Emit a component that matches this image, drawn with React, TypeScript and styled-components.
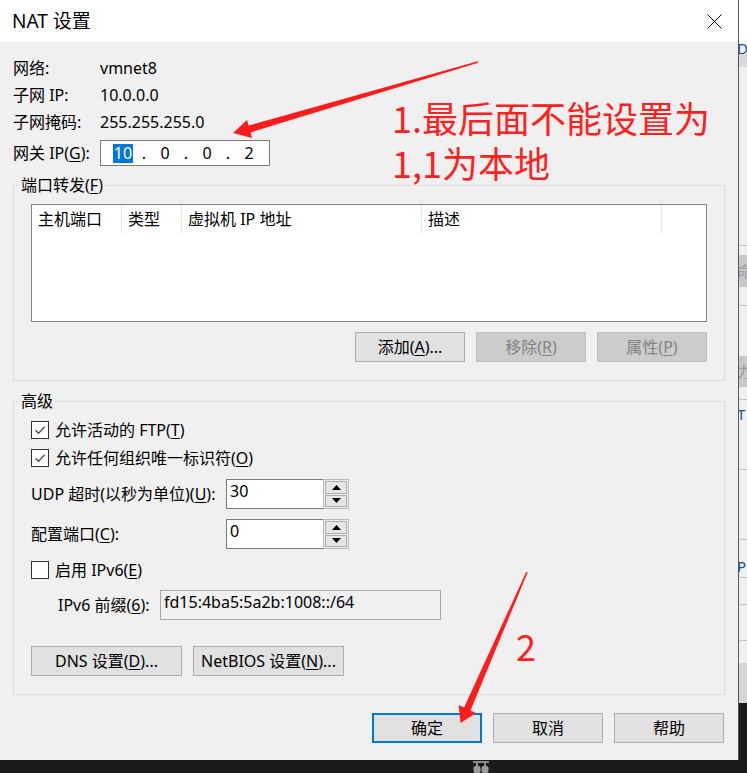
import React from "react";
import styled, { createGlobalStyle, css } from "styled-components";

const GlobalStyle = createGlobalStyle`
    html, body {
        margin: 0;
        padding: 0;
        background: #1b1b1b;
    }
    * {
        box-sizing: border-box;
    }
`;

const Desktop = styled.div`
    position: relative;
    width: 747px;
    height: 773px;
    overflow: hidden;
    display: grid;
    grid-template-columns: 739px 8px;
    grid-template-rows: 760px 13px;
    background: #1b1b1b;
    font-family: "Noto Sans", "Noto Sans CJK SC", sans-serif;
    font-size: 16px;
    line-height: 20px;
    color: #000;
`;

const Dialog = styled.div`
    display: flex;
    flex-direction: column;
    background: #f0f0f0;
    border-right: 1px solid #575757;
`;

const TitleBar = styled.div`
    flex: none;
    height: 42px;
    display: flex;
    align-items: center;
    justify-content: space-between;
    padding-left: 12px;
    background: #fff;
`;

const Title = styled.span`
    font-size: 19px;
    line-height: 24px;
`;

const CloseButton = styled.div`
    width: 47px;
    height: 42px;
    display: flex;
    align-items: center;
    justify-content: center;
`;

const Body = styled.div`
    flex: 1;
    display: flex;
    flex-direction: column;
    padding: 12px 13px 0;
`;

const InfoGrid = styled.div`
    display: grid;
    grid-template-columns: 87px auto;
    grid-auto-rows: 27px;
    align-items: center;
`;

const GatewayRow = styled.div`
    display: grid;
    grid-template-columns: 87px 170px;
    align-items: center;
    height: 26px;
    margin-top: 5px;
`;

const IpField = styled.div`
    display: flex;
    align-items: center;
    height: 26px;
    padding-left: 8px;
    border: 1px solid #7a7a7a;
    background: #fff;
`;

const IpOctet = styled.span`
    width: 28px;
    text-align: center;
`;

const IpDot = styled.span`
    width: 14px;
    text-align: center;
`;

const Selected = styled.span`
    display: inline-block;
    padding: 0 1px;
    line-height: 19px;
    background: #0078d7;
    color: #fff;
`;

const Key = styled.span`
    text-decoration: underline;
    text-underline-offset: 2px;
`;

const Group = styled.section<{ $gap: number; $top: number }>`
    position: relative;
    margin-top: ${(p) => p.$gap}px;
    padding: ${(p) => p.$top}px 17px 18px;
    border: 1px solid #dcdcdc;
`;

const GroupTitle = styled.span`
    position: absolute;
    top: -11px;
    left: 5px;
    padding: 0 2px;
    background: #f0f0f0;
`;

const ListView = styled.div`
    height: 118px;
    border: 1px solid #828790;
    background: #fff;
`;

const ListHeader = styled.div`
    display: flex;
    height: 28px;
`;

const HeaderCell = styled.div<{ $w: number }>`
    width: ${(p) => p.$w}px;
    padding-left: 6px;
    line-height: 28px;
    border-right: 1px solid #e5e5e5;
`;

const ButtonRow = styled.div<{ $align: "start" | "end"; $gap: number }>`
    display: flex;
    justify-content: ${(p) => (p.$align === "end" ? "flex-end" : "flex-start")};
    gap: 11px;
    margin-top: ${(p) => p.$gap}px;
`;

type ButtonKind = "normal" | "default" | "disabled";

const Button = styled.button<{ $w?: number; $kind?: ButtonKind }>`
    width: ${(p) => p.$w ?? 110}px;
    height: 30px;
    padding: 0;
    font: inherit;
    color: #000;
    background: #e1e1e1;
    border: 1px solid #adadad;
    ${(p) =>
        p.$kind === "default" &&
        css`
            border: 2px solid #0078d7;
        `}
    ${(p) =>
        p.$kind === "disabled" &&
        css`
            background: #cccccc;
            border-color: #bfbfbf;
            color: #838383;
        `}
`;

const CheckRow = styled.label<{ $gap?: number }>`
    display: flex;
    align-items: center;
    gap: 6px;
    height: 28px;
    margin-top: ${(p) => p.$gap ?? 0}px;
`;

const CheckBox = styled.span`
    width: 18px;
    height: 18px;
    display: flex;
    align-items: center;
    justify-content: center;
    border: 1px solid #333;
    background: #fff;
`;

const FieldRow = styled.div<{ $gap: number }>`
    display: grid;
    grid-template-columns: 195px 123px;
    align-items: center;
    height: 30px;
    margin-top: ${(p) => p.$gap}px;
`;

const SpinBox = styled.div`
    display: flex;
    height: 30px;
`;

const SpinInput = styled.div`
    flex: 1;
    padding: 1px 3px;
    border: 1px solid #7a7a7a;
    border-right: none;
    background: #fff;
`;

const SpinButtons = styled.div`
    width: 26px;
    display: flex;
    flex-direction: column;
    gap: 1px;
    padding: 1px;
    border: 1px solid #b9b9b9;
    background: #f0f0f0;
`;

const SpinButton = styled.div`
    flex: 1;
    display: flex;
    align-items: center;
    justify-content: center;
    border: 1px solid #adadad;
    background: #e5e5e5;
`;

const PrefixRow = styled.div`
    display: flex;
    align-items: center;
    height: 30px;
    margin-top: 6px;
    padding-left: 27px;
`;

const PrefixLabel = styled.span`
    width: 102px;
`;

const ReadOnlyField = styled.div`
    width: 281px;
    height: 30px;
    padding: 1px 3px;
    border: 1px solid #a9a9a9;
    background: #f0f0f0;
`;

const Footer = styled.div`
    display: flex;
    justify-content: flex-end;
    gap: 11px;
    margin-top: 18px;
    padding-right: 1px;
`;

const BackWindow = styled.div`
    align-self: start;
    height: 703px;
    display: flex;
    flex-direction: column;
    background: #f0f0f0;
    box-shadow: inset 3px 0 3px -2px rgba(0, 0, 0, 0.35);
    overflow: hidden;
`;

const BackRow = styled.div<{ $h: number; $bg: string; $line?: boolean; $ink?: string }>`
    flex: none;
    height: ${(p) => p.$h}px;
    background: ${(p) => p.$bg};
    border-bottom: ${(p) => (p.$line ? "1px solid #c4c4c4" : "none")};
    color: ${(p) => p.$ink ?? "#000"};
    font-size: 15px;
    line-height: ${(p) => p.$h}px;
    white-space: nowrap;
    overflow: hidden;
    text-indent: -2px;
`;

const Taskbar = styled.div`
    grid-column: 1 / span 2;
    display: flex;
    align-items: flex-start;
    padding-left: 472px;
    background: #1b1b1b;
`;

const Overlay = styled.svg`
    position: absolute;
    inset: 0;
    pointer-events: none;
`;

const Note = styled.div<{ $top: number; $left: number; $size: number; $lh: number }>`
    position: absolute;
    top: ${(p) => p.$top}px;
    left: ${(p) => p.$left}px;
    font-family: "Noto Sans CJK SC", sans-serif;
    font-size: ${(p) => p.$size}px;
    line-height: ${(p) => p.$lh}px;
    color: #ff2020;
    white-space: pre;
    pointer-events: none;
`;

const Check = () => (
    <svg width="12" height="12" viewBox="0 0 12 12">
        <path d="M1.5 6.2 L4.6 9.2 L10.6 2.8" fill="none" stroke="#505050" strokeWidth="1.3" />
    </svg>
);

const Arrow = ({ up }: { up: boolean }) => (
    <svg width="9" height="5" viewBox="0 0 9 5">
        <polygon points={up ? "0,5 9,5 4.5,0" : "0,0 9,0 4.5,5"} fill="#000" />
    </svg>
);

const Spinner = ({ value }: { value: string }) => (
    <SpinBox>
        <SpinInput>{value}</SpinInput>
        <SpinButtons>
            <SpinButton>
                <Arrow up />
            </SpinButton>
            <SpinButton>
                <Arrow up={false} />
            </SpinButton>
        </SpinButtons>
    </SpinBox>
);

// strip of the window that sits behind the dialog
const backRows = [
    { h: 43, bg: "#ffffff" },
    { h: 11, bg: "#f4f4f4", ink: "#1a4fa0", text: "D" },
    { h: 13, bg: "#dadada" },
    { h: 179, bg: "#f0f0f0", line: true },
    { h: 9, bg: "#f0f0f0" },
    { h: 32, bg: "#c9c9c9", ink: "#9a9a9a", text: "命" },
    { h: 19, bg: "#f0f0f0", line: true },
    { h: 50, bg: "#f0f0f0" },
    { h: 31, bg: "#c9c9c9", ink: "#9a9a9a", text: "力" },
    { h: 13, bg: "#f0f0f0", line: true },
    { h: 28, bg: "#f0f0f0", ink: "#1a4fa0", text: "T" },
    { h: 42, bg: "#f0f0f0", line: true },
    { h: 70, bg: "#f0f0f0", line: true },
    { h: 14, bg: "#f0f0f0" },
    { h: 24, bg: "#f0f0f0", ink: "#1a4fa0", text: "P", line: true },
    { h: 27, bg: "#f0f0f0", line: true },
    { h: 36, bg: "#f0f0f0", line: true },
    { h: 22, bg: "#f0f0f0" },
    { h: 40, bg: "#d6d6d6" },
];

export default function App() {
    return (
        <Desktop>
            <GlobalStyle />
            <Dialog>
                <TitleBar>
                    <Title>NAT 设置</Title>
                    <CloseButton>
                        <svg width="15" height="15" viewBox="0 0 15 15">
                            <path d="M0.5 0.5 L14.5 14.5 M14.5 0.5 L0.5 14.5" stroke="#000" strokeWidth="1" />
                        </svg>
                    </CloseButton>
                </TitleBar>
                <Body>
                    <InfoGrid>
                        <span>网络:</span>
                        <span>vmnet8</span>
                        <span>子网 IP:</span>
                        <span>10.0.0.0</span>
                        <span>子网掩码:</span>
                        <span>255.255.255.0</span>
                    </InfoGrid>
                    <GatewayRow>
                        <span>
                            网关 IP(<Key>G</Key>):
                        </span>
                        <IpField>
                            <IpOctet>
                                <Selected>10</Selected>
                            </IpOctet>
                            <IpDot>.</IpDot>
                            <IpOctet>0</IpOctet>
                            <IpDot>.</IpDot>
                            <IpOctet>0</IpOctet>
                            <IpDot>.</IpDot>
                            <IpOctet>2</IpOctet>
                        </IpField>
                    </GatewayRow>

                    <Group $gap={19} $top={18}>
                        <GroupTitle>
                            端口转发(<Key>F</Key>)
                        </GroupTitle>
                        <ListView>
                            <ListHeader>
                                <HeaderCell $w={90}>主机端口</HeaderCell>
                                <HeaderCell $w={60}>类型</HeaderCell>
                                <HeaderCell $w={240}>虚拟机 IP 地址</HeaderCell>
                                <HeaderCell $w={240}>描述</HeaderCell>
                            </ListHeader>
                        </ListView>
                        <ButtonRow $align="end" $gap={10}>
                            <Button>
                                添加(<Key>A</Key>)...
                            </Button>
                            <Button $kind="disabled">
                                移除(<Key>R</Key>)
                            </Button>
                            <Button $kind="disabled">
                                属性(<Key>P</Key>)
                            </Button>
                        </ButtonRow>
                    </Group>

                    <Group $gap={20} $top={14}>
                        <GroupTitle>高级</GroupTitle>
                        <CheckRow>
                            <CheckBox>
                                <Check />
                            </CheckBox>
                            <span>
                                允许活动的 FTP(<Key>T</Key>)
                            </span>
                        </CheckRow>
                        <CheckRow>
                            <CheckBox>
                                <Check />
                            </CheckBox>
                            <span>
                                允许任何组织唯一标识符(<Key>O</Key>)
                            </span>
                        </CheckRow>
                        <FieldRow $gap={7}>
                            <span>
                                UDP 超时(以秒为单位)(<Key>U</Key>):
                            </span>
                            <Spinner value="30" />
                        </FieldRow>
                        <FieldRow $gap={10}>
                            <span>
                                配置端口(<Key>C</Key>):
                            </span>
                            <Spinner value="0" />
                        </FieldRow>
                        <CheckRow $gap={7}>
                            <CheckBox />
                            <span>
                                启用 IPv6(<Key>E</Key>)
                            </span>
                        </CheckRow>
                        <PrefixRow>
                            <PrefixLabel>
                                IPv6 前缀(<Key>6</Key>):
                            </PrefixLabel>
                            <ReadOnlyField>fd15:4ba5:5a2b:1008::/64</ReadOnlyField>
                        </PrefixRow>
                        <ButtonRow $align="start" $gap={26}>
                            <Button $w={151}>
                                DNS 设置(<Key>D</Key>)...
                            </Button>
                            <Button $w={151}>
                                NetBIOS 设置(<Key>N</Key>)...
                            </Button>
                        </ButtonRow>
                    </Group>

                    <Footer>
                        <Button $kind="default">确定</Button>
                        <Button>取消</Button>
                        <Button>帮助</Button>
                    </Footer>
                </Body>
            </Dialog>

            <BackWindow>
                {backRows.map((r, i) => (
                    <BackRow key={i} $h={r.h} $bg={r.bg} $line={r.line} $ink={r.ink}>
                        {r.text}
                    </BackRow>
                ))}
            </BackWindow>

            <Taskbar>
                <svg width="18" height="13" viewBox="0 0 18 13">
                    <rect x="1" y="1" width="16" height="2" fill="#8a8a8a" />
                    <rect x="4" y="3" width="2" height="3" fill="#8a8a8a" />
                    <rect x="12" y="3" width="2" height="3" fill="#8a8a8a" />
                    <rect x="1.5" y="6" width="7" height="7" rx="2" fill="#9a9a9a" />
                    <rect x="9.5" y="6" width="7" height="7" rx="2" fill="#9a9a9a" />
                </svg>
            </Taskbar>

            <Overlay width="747" height="773" viewBox="0 0 747 773">
                <polygon
                    points="233,133 252,138 250.5,132.4 478.2,62.8 477.8,61.2 248.5,125.6 247,120"
                    fill="#ff1c1c"
                />
                <polygon
                    points="460.5,723 476,713 470.5,710.4 527.7,572.3 526.3,571.7 464.1,707.6 458.6,705"
                    fill="#ff1c1c"
                />
            </Overlay>
            <Note $top={95} $left={392} $size={36} $lh={45}>
                {"1.最后面不能设置为\n1,1为本地"}
            </Note>
            <Note $top={627} $left={516} $size={36} $lh={36}>
                2
            </Note>
        </Desktop>
    );
}
